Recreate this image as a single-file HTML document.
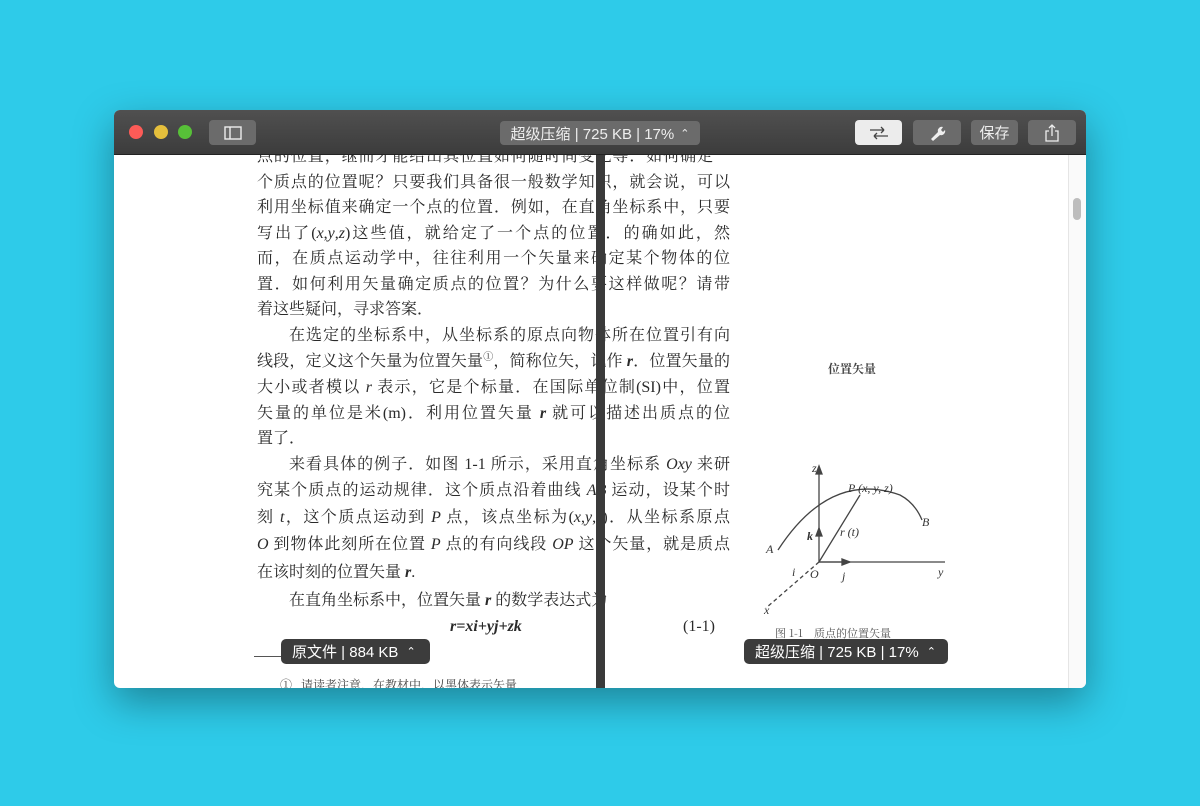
<!DOCTYPE html>
<html><head><meta charset="utf-8"><style>
*{margin:0;padding:0;box-sizing:border-box}
body{width:1200px;height:806px;background:#2ecbe9;position:relative;overflow:hidden;font-family:"Liberation Sans","Noto Sans CJK SC",sans-serif}
.win{position:absolute;left:114px;top:110px;width:972px;height:578px;border-radius:6px;overflow:hidden;background:#fff;box-shadow:0 14px 40px rgba(0,0,0,.35)}
.tb{position:absolute;left:0;top:0;width:100%;height:45px;background:linear-gradient(#505050,#3c3c3c);border-bottom:1px solid #222}
.dot{position:absolute;top:15px;width:14px;height:14px;border-radius:50%}
.btn{position:absolute;top:10px;height:25px;border-radius:4px;background:#6b6b6b;color:#eee;font-size:15px;display:flex;align-items:center;justify-content:center}
.txt{position:absolute;left:143px;font-family:"Liberation Serif","Noto Serif CJK SC",serif;font-size:16px;color:#2a2a2a}
.l{width:473px;height:25.5px;line-height:25.5px;text-align:justify;text-align-last:justify;white-space:nowrap;overflow:visible}
.l.n{text-align-last:left}
.ind{padding-left:32px}
sup{font-size:10px;line-height:0;vertical-align:6px}
.badge{position:absolute;height:25px;background:#3c3c3c;color:#fff;border-radius:5px;font-size:15px;display:flex;align-items:center;padding-left:11px}
</style></head><body>
<div class="win">
<div class="txt" style="top:34px">
<div class="l">点的位置，继而才能给出其位置如何随时间变化等．如何确定一</div>
<div class="l">个质点的位置呢？只要我们具备很一般数学知识，就会说，可以</div>
<div class="l">利用坐标值来确定一个点的位置．例如，在直角坐标系中，只要</div>
<div class="l">写出了(<i>x</i>,<i>y</i>,<i>z</i>)这些值，就给定了一个点的位置．的确如此，然</div>
<div class="l">而，在质点运动学中，往往利用一个矢量来确定某个物体的位</div>
<div class="l">置．如何利用矢量确定质点的位置？为什么要这样做呢？请带</div>
<div class="l n">着这些疑问，寻求答案．</div>
<div class="l ind">在选定的坐标系中，从坐标系的原点向物体所在位置引有向</div>
<div class="l" style="height:27px;line-height:27px">线段，定义这个矢量为位置矢量<sup>①</sup>，简称位矢，记作 <b><i>r</i></b>．位置矢量的</div>
<div class="l">大小或者模以 <i>r</i> 表示，它是个标量．在国际单位制(SI)中，位置</div>
<div class="l">矢量的单位是米(m)．利用位置矢量 <b><i>r</i></b> 就可以描述出质点的位</div>
<div class="l n">置了．</div>
<div class="l ind">来看具体的例子．如图 1-1 所示，采用直角坐标系 <i>Oxy</i> 来研</div>
<div class="l" style="height:27px;line-height:27px">究某个质点的运动规律．这个质点沿着曲线 <i>AB</i> 运动，设某个时</div>
<div class="l" style="height:27px;line-height:27px">刻 <i>t</i>，这个质点运动到 <i>P</i> 点，该点坐标为(<i>x</i>,<i>y</i>,<i>z</i>)．从坐标系原点</div>
<div class="l" style="height:28px;line-height:28px"><i>O</i> 到物体此刻所在位置 <i>P</i> 点的有向线段 <i>OP</i> 这个矢量，就是质点</div>
<div class="l n" style="height:28px;line-height:28px">在该时刻的位置矢量 <b><i>r</i></b>.</div>
<div class="l n ind" style="height:27px;line-height:27px">在直角坐标系中，位置矢量 <b><i>r</i></b> 的数学表达式为</div>
<div style="position:relative;height:26px;line-height:26px"><span style="position:absolute;left:193px;font-weight:bold;font-style:italic">r=xi+yj+zk</span><span style="position:absolute;left:426px">(1-1)</span></div>
</div>
<div style="position:absolute;left:140px;top:546px;width:30px;border-top:1px solid #555"></div>
<div style="position:absolute;left:166px;top:566px;font-family:'Liberation Serif','Noto Serif CJK SC',serif;font-size:12px;color:#444">①&nbsp;&nbsp;&nbsp;请读者注意，在教材中，以黑体表示矢量．</div>
<div style="position:absolute;left:714px;top:250px;font-size:12px;font-weight:bold;color:#444;font-family:'Noto Serif CJK SC',serif">位置矢量</div>
<svg style="position:absolute;left:636px;top:340px" width="230" height="200" viewBox="750 450 230 200">
<g stroke="#444" fill="none" stroke-width="1.3">
<line x1="819" y1="562" x2="819" y2="468"/><path d="M816 474 L819 466 L822 474Z" fill="#444"/>
<line x1="819" y1="562" x2="945" y2="562"/>
<line x1="819" y1="562" x2="766" y2="608" stroke-dasharray="4 3"/>
<line x1="819" y1="562" x2="860" y2="495"/>
<path d="M778 550 Q830 470 900 495 Q915 503 922 520"/>
<line x1="819" y1="562" x2="848" y2="562"/><path d="M842 559 L850 562 L842 565Z" fill="#444"/>
<path d="M816 536 L819 528 L822 536Z" fill="#444"/>
</g>
<g font-family="Liberation Serif" font-style="italic" font-size="12" fill="#333">
<text x="812" y="472">z</text><text x="848" y="492">P (x, y, z)</text><text x="922" y="526">B</text>
<text x="766" y="553">A</text><text x="807" y="540" font-weight="bold">k</text><text x="840" y="536">r (t)</text>
<text x="792" y="576">i</text><text x="810" y="578">O</text><text x="842" y="580">j</text><text x="938" y="576">y</text><text x="764" y="614">x</text>
</g>
<text x="775" y="637" font-size="11" fill="#555" font-family="Noto Serif CJK SC">图 1-1　质点的位置矢量</text>
</svg>
<div style="position:absolute;left:482px;top:45px;width:9px;height:533px;background:#3a3a3a"></div>
<div style="position:absolute;left:954px;top:45px;width:18px;height:533px;background:#fafafa;border-left:1px solid #e5e5e5"></div>
<div style="position:absolute;left:959px;top:88px;width:8px;height:22px;border-radius:4px;background:#bdbdbd"></div>
<div class="badge" style="left:167px;top:529px;width:149px">原文件 | 884 KB <span style="margin-left:8px;font-size:11px">⌃</span></div>
<div class="badge" style="left:630px;top:529px;width:204px">超级压缩 | 725 KB | 17% <span style="margin-left:8px;font-size:11px">⌃</span></div>
<div class="tb">
<div class="dot" style="left:15px;background:#fc5b57"></div>
<div class="dot" style="left:40px;background:#e5bf3c"></div>
<div class="dot" style="left:64px;background:#57c038"></div>
<div class="btn" style="left:95px;width:47px"><svg width="18" height="14"><rect x="1" y="1" width="16" height="12" fill="none" stroke="#eee" stroke-width="1.4"/><line x1="6" y1="1" x2="6" y2="13" stroke="#eee" stroke-width="1.4"/></svg></div>
<div class="btn" style="left:386px;width:200px;top:11px;height:24px">超级压缩 | 725 KB | 17% <span style="margin-left:6px;font-size:11px">⌃</span></div>
<div class="btn" style="left:741px;width:47px;background:#ececec"><svg width="24" height="16"><g stroke="#444" stroke-width="1.3" fill="none"><path d="M7 11 H21 M7 11 L10 8 M7 11 L10 14"/><path d="M3 5 H17 M17 5 L14 2 M17 5 L14 8"/></g></svg></div>
<div class="btn" style="left:799px;width:48px"><svg width="18" height="18"><path d="M3 15 L10 8 A4 4 0 0 1 15 3 L13 6 L15 8 L17 6 A4 4 0 0 1 12 11 L5 17Z" fill="#eee"/></svg></div>
<div class="btn" style="left:857px;width:47px">保存</div>
<div class="btn" style="left:914px;width:48px"><svg width="16" height="18"><g stroke="#eee" stroke-width="1.3" fill="none"><path d="M5 7 H2 V17 H14 V7 H11"/><path d="M8 12 V1 M5 4 L8 1 L11 4"/></g></svg></div>
</div>
</div>
</body></html>
